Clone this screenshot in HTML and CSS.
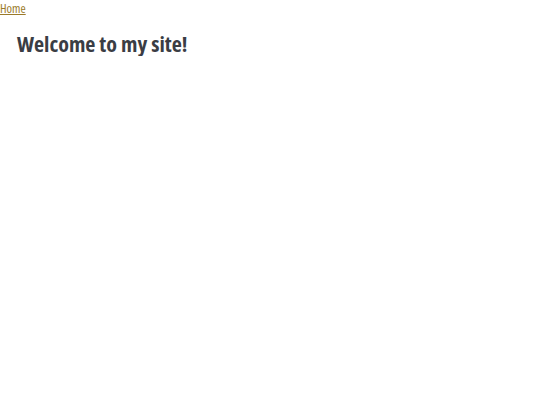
FILE: index.html
```
<!DOCTYPE html>
<html>
<head>
<meta charset="utf-8">
<link rel="stylesheet" href="styles.css">
</head>
<body>
<nav class="nav"><a class="nav-link" href="#">Home</a></nav>
<h1 class="title">Welcome to my site!</h1>
</body>
</html>
```
FILE: styles.css
```
html, body { margin: 0; padding: 0; background: #fff; }
body { font-family: "Open Sans", "DejaVu Sans", sans-serif; font-stretch: condensed; }
.nav { padding-top: 2px; line-height: 14px; font-size: 12.5px; }
.nav-link { color: #9a7a2a; text-decoration: underline; }
.title { margin: 14px 0 0 17px; font-size: 22px; line-height: 26px; font-weight: bold; color: #3a3d44; }
```
